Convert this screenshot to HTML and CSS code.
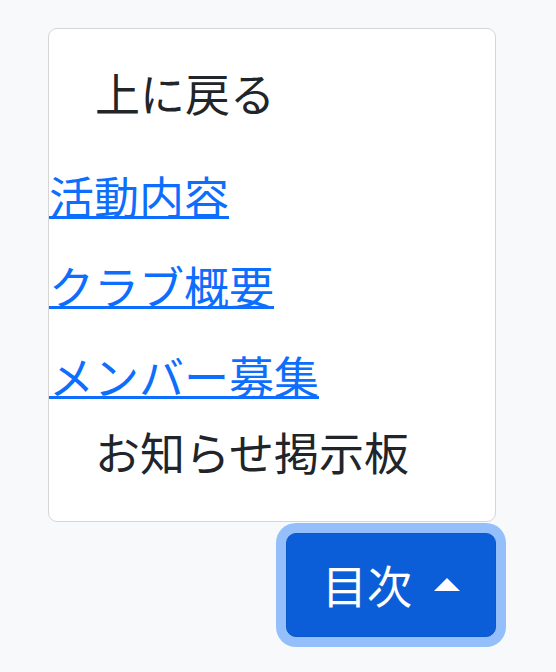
FILE: index.html
```html
<!DOCTYPE html>
<html lang="ja">
<head>
    <meta charset="UTF-8">
    <meta name="viewport" content="width=device-width, initial-scale=1.0">
    <title>目次</title>
    <link rel="stylesheet" href="styles.css">
</head>

<body>
    <!-- Table of contents dropup -->
    <div class="toc">
        <ul class="toc-menu">
            <li><span class="toc-item">上に戻る</span></li>
            <li><a class="toc-link" href="#activity">活動内容</a></li>
            <li><a class="toc-link" href="#about">クラブ概要</a></li>
            <li><a class="toc-link" href="#members">メンバー募集</a></li>
            <li><span class="toc-item">お知らせ掲示板</span></li>
        </ul>
        <button class="toc-btn" type="button">目次 <span class="caret"></span></button>
    </div>
</body>
</html>
```

FILE: styles.css
```css
body {
    font-family: "Noto Sans CJK JP", "Noto Sans", sans-serif;
    background-color: #f8f9fa;
    color: #212529;
    margin: 0;
    padding: 0;
}
.toc {
    display: flex;
    flex-direction: column;
    align-items: flex-end;
    gap: 11px;
    padding: 28px 60px 30px 0;
}
.toc-menu {
    list-style: none;
    box-sizing: border-box;
    width: 448px;
    margin: 0;
    padding: 22px 0;
    background-color: #fff;
    border: 1px solid #d6d6d7;
    border-radius: 9px;
    font-size: 45px;
    line-height: 66px;
}
.toc-item {
    display: block;
    padding: 9px 44px 14px 46px;
    color: #212529;
}
.toc-link {
    display: inline-block;
    margin-top: 23px;
    color: #0d6efd;
    text-decoration: underline;
    text-decoration-thickness: 3px;
    text-underline-offset: 1px;
}
.toc-link:last-of-type {
    margin-bottom: 1px;
}
.toc-btn {
    font-family: inherit;
    font-size: 45px;
    line-height: 66px;
    color: #fff;
    background-color: #0b5ed7;
    border: 1px solid #0a58ca;
    border-radius: 10px;
    padding: 18px 35px 18px 35px;
    box-shadow: 0 0 0 10px #94bffb;
    cursor: pointer;
}
.caret {
    display: inline-block;
    width: 0;
    height: 0;
    margin-left: 12px;
    vertical-align: 13px;
    border-left: 13px solid transparent;
    border-right: 13px solid transparent;
    border-bottom: 13px solid #fff;
}
```
